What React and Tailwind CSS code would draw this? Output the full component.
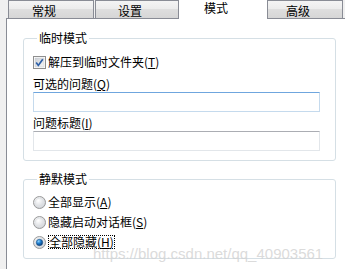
import React from "react";

function Tab({ label, active, className }) {
  if (active) {
    return (
      <div className={`relative z-10 h-[19px] bg-white flex justify-center pr-[14px] leading-[14px] ${className}`}>
        <span className="pt-[1px]">{label}</span>
      </div>
    );
  }
  return (
    <div
      className={`h-[18px] border border-b-0 border-[#898c95] bg-[linear-gradient(#f4f4f4_0%,#ececec_45%,#dedede_50%,#d6d6d6_100%)] flex justify-center pr-[14px] leading-[14px] ${className}`}
    >
      <span className="pt-[3px]">{label}</span>
    </div>
  );
}

function Checkbox() {
  return (
    <svg width="13" height="13" viewBox="0 0 13 13" className="shrink-0">
      <defs>
        <linearGradient id="cbg" x1="0" y1="0" x2="1" y2="1">
          <stop offset="0" stopColor="#cbcfd5" />
          <stop offset="1" stopColor="#f6f6f6" />
        </linearGradient>
      </defs>
      <rect x="0.5" y="0.5" width="12" height="12" fill="#fff" stroke="#8f8f8f" />
      <rect x="2" y="2" width="9" height="9" fill="url(#cbg)" stroke="#c5c9cf" strokeWidth="0.5" />
      <path d="M3.2 6.6 L5.3 9.4 L9.8 3.2" fill="none" stroke="#2c5fa8" strokeWidth="1.7" />
    </svg>
  );
}

function Radio({ checked }) {
  const id = checked ? "rOn" : "rOff";
  return (
    <svg width="13" height="13" viewBox="0 0 13 13" className="shrink-0">
      <defs>
        <radialGradient id={id + "bg"} cx="0.4" cy="0.35" r="0.7">
          <stop offset="0" stopColor="#ffffff" />
          <stop offset="1" stopColor="#c9ccd1" />
        </radialGradient>
        <radialGradient id={id + "dot"} cx="0.35" cy="0.3" r="0.7">
          <stop offset="0" stopColor="#8fd3ff" />
          <stop offset="0.5" stopColor="#1e7fcf" />
          <stop offset="1" stopColor="#0c3f7a" />
        </radialGradient>
      </defs>
      <circle cx="6.5" cy="6.5" r="6" fill={`url(#${id}bg)`} stroke="#9a9a9a" />
      <circle cx="6.5" cy="6.5" r="4.3" fill="none" stroke="#e0e2e5" strokeWidth="0.8" />
      {checked && <circle cx="6.5" cy="6.5" r="3.2" fill={`url(#${id}dot)`} stroke="#1a4f86" strokeWidth="0.6" />}
    </svg>
  );
}

function Accel({ k }) {
  return (
    <span>
      (<span className="underline underline-offset-[1px]">{k}</span>)
    </span>
  );
}

export default function App() {
  return (
    <div className="relative w-[345px] h-[269px] overflow-hidden bg-[#f0f0f0] text-[12px] text-black font-['Noto_Sans_CJK_SC','Microsoft_YaHei',sans-serif]">
      <div className="flex h-[18px] pl-[8px]">
        <Tab label="常规" className="w-[86px]" />
        <Tab label="设置" className="ml-[1px] w-[84px]" />
        <Tab label="模式" active className="w-[88px]" />
        <Tab label="高级" className="w-[76px]" />
      </div>

      <div className="ml-[6px] h-[251px] bg-white border-l border-t border-[#898c95] pl-[16px] pt-[12px]">
        <fieldset className="w-[313px] border border-[#d5dfe5] rounded-[3px] px-[9px] pb-[9px]">
          <legend className="ml-[4px] px-[2px] leading-[14px]">临时模式</legend>
          <div className="mt-[10px] h-[14px] flex items-center gap-[2px] leading-[14px]">
            <Checkbox />
            <span>
              解压到临时文件夹<Accel k="T" />
            </span>
          </div>
          <div className="mt-[8px] leading-[14px]">
            可选的问题<Accel k="Q" />
          </div>
          <div className="mt-[1px] w-[287px] h-[20px] bg-white border border-[#c5daed] border-t-[#6fa6de]" />
          <div className="mt-[4px] leading-[14px]">
            问题标题<Accel k="I" />
          </div>
          <div className="mt-[1px] w-[287px] h-[20px] bg-white border border-[#e2e6ea] border-t-[#abadb3]" />
        </fieldset>

        <fieldset className="mt-[11px] w-[313px] border border-[#d5dfe5] rounded-[3px] px-[9px] pb-[6px]">
          <legend className="ml-[4px] px-[2px] leading-[14px]">静默模式</legend>
          <div className="mt-[6px] flex flex-col">
            <div className="h-[20px] flex items-center gap-[2px] leading-[14px]">
              <Radio />
              <span>
                全部显示<Accel k="A" />
              </span>
            </div>
            <div className="h-[20px] flex items-center gap-[2px] leading-[14px]">
              <Radio />
              <span>
                隐藏启动对话框<Accel k="S" />
              </span>
            </div>
            <div className="h-[20px] flex items-center gap-[2px] leading-[12px]">
              <Radio checked />
              <span className="border border-dotted border-black px-0">
                全部隐藏<Accel k="H" />
              </span>
            </div>
          </div>
        </fieldset>
      </div>

      <div className="absolute left-[93px] top-[245px] text-[15px] leading-[18px] text-[#d2d2d2]/80 font-['Liberation_Sans',Arial,sans-serif] whitespace-nowrap pointer-events-none">
        https://blog.csdn.net/qq_40903561
      </div>
    </div>
  );
}
